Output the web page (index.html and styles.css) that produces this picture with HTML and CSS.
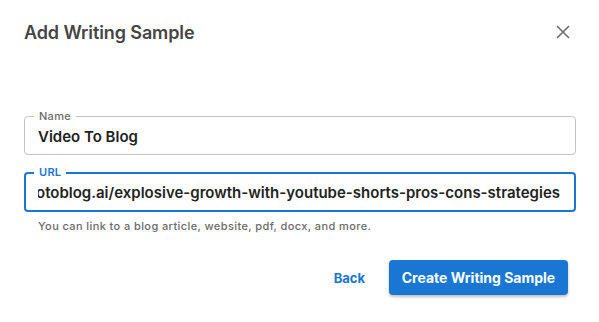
FILE: index.html
```html
<!DOCTYPE html>
<html>
    <head>
        <meta charset="utf-8" />
        <title>Add Writing Sample</title>
        <link rel="stylesheet" href="styles.css">
    </head>

    <body>
      <div class="dialog">

            <div class="dialog-header">
                <h2 class="dialog-title">Add Writing Sample</h2>
                <button class="close-btn" aria-label="close">
                    <svg width="14" height="14" viewBox="0 0 14 14">
                        <path d="M1 1 L13 13 M13 1 L1 13" stroke="#6b6b6b" stroke-width="1.6" fill="none"/>
                    </svg>
                </button>
            </div>

            <div class="dialog-content">
                <div class="field">
                    <span class="field-label">Name</span>
                    <div class="field-value">Video To Blog</div>
                </div>

                <div class="field field-focused">
                    <span class="field-label">URL</span>
                    <div class="field-value field-scroll"><span>https://www.videotoblog.ai/explosive-growth-with-youtube-shorts-pros-cons-strategies</span></div>
                </div>
                <p class="helper">You can link to a blog article, website, pdf, docx, and more.</p>
            </div>

            <div class="dialog-actions">
                <button class="btn-text">Back</button>
                <button class="btn-primary">Create Writing Sample</button>
            </div>
      </div>
    </body>
</html>
```

FILE: styles.css
```css
body{
    margin: 0;
    background-color: #ffffff;
    font-family: Inter, "Noto Sans", sans-serif;
}
.dialog{
    width: 599px;
    height: 322px;
    background-color: #ffffff;
}
.dialog-header{
    display: flex;
    justify-content: space-between;
    align-items: center;
    padding: 20px 29px 0 24px;
    height: 24px;
}
.dialog-title{
    margin: 0;
    font-size: 18px;
    font-weight: 600;
    color: #454545;
    letter-spacing: -0.1px;
}
.close-btn{
    border: none;
    background: none;
    padding: 0;
    display: flex;
    cursor: pointer;
}
.dialog-content{
    padding: 72px 23px 0 24px;
}
.field{
    border: 1px solid #c4c4c4;
    border-radius: 4px;
    padding: 0 14px 0 13px;
    height: 39px;
    box-sizing: border-box;
    display: flex;
    align-items: center;
    position: relative;
}
.field + .field{
    margin-top: 17px;
}
.field-label{
    position: absolute;
    top: -7px;
    left: 9px;
    padding: 0 5px;
    background-color: #ffffff;
    font-size: 11px;
    font-weight: 500;
    color: #6b6b6b;
    line-height: 13px;
    letter-spacing: 0.3px;
}
.field-value{
    font-size: 15px;
    font-weight: 600;
    color: #222222;
    line-height: 20px;
    white-space: nowrap;
    margin-top: 2px;
}
.field-focused{
    border: 2px solid #1976d2;
    height: 40px;
    padding: 0 14px 0 12px;
}
.field-focused .field-label{
    top: -8px;
    left: 8px;
    color: #1976d2;
    font-weight: 600;
}
.field-scroll{
    flex: 1;
    min-width: 0;
    overflow: hidden;
    display: flex;
    justify-content: flex-end;
}
.field-scroll span{
    flex-shrink: 0;
}
.helper{
    margin: 7px 0 0 14px;
    font-size: 11px;
    line-height: 14px;
    color: #6b6b6b;
    font-weight: 500;
    letter-spacing: 0.4px;
}
.dialog-actions{
    display: flex;
    justify-content: flex-end;
    align-items: center;
    gap: 24px;
    padding: 27px 31px 0 0;
}
.btn-text{
    border: none;
    background: none;
    color: #1976d2;
    font-family: inherit;
    font-size: 13px;
    font-weight: 700;
    padding: 0;
}
.btn-primary{
    border: none;
    background-color: #1976d2;
    color: #ffffff;
    font-family: inherit;
    font-size: 14px;
    font-weight: 700;
    height: 35px;
    width: 179px;
    border-radius: 4px;
    box-shadow: 0 2px 3px rgba(0,0,0,0.25);
}
```
